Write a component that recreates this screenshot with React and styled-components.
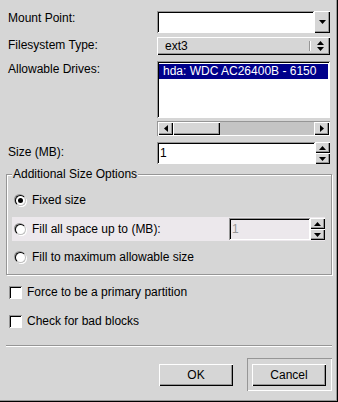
import React from 'react';
import styled, { createGlobalStyle, css } from 'styled-components';

const BG = '#d6d6d6';
const DARK = '#969696';

const raised = css`
  box-shadow: inset 1px 1px 0 #fff, inset -1px -1px 0 #000, inset -2px -2px 0 ${DARK};
`;

const sunken = css`
  box-shadow: inset 1px 1px 0 ${DARK}, inset -1px -1px 0 #fff, inset 2px 2px 0 #000;
`;

const GlobalStyle = createGlobalStyle`
  html, body { margin: 0; padding: 0; background: ${BG}; }
  * { box-sizing: border-box; }
`;

const Window = styled.div`
  width: 338px;
  height: 402px;
  background: ${BG};
  font-family: "Liberation Sans", Arial, sans-serif;
  font-size: 12px;
  color: #000;
  box-shadow: inset -1px -1px 0 #000, inset -2px -2px 0 ${DARK};
  display: flex;
  flex-direction: column;
  overflow: hidden;
`;

const Form = styled.div`
  padding: 0 8px;
`;

const Row = styled.div`
  display: flex;
  margin-top: ${p => p.$mt}px;
`;

const Label = styled.div`
  width: 149px;
  flex: none;
  line-height: 14px;
  padding-top: ${p => p.$pt || 0}px;
`;

const Control = styled.div`
  width: 173px;
  flex: none;
`;

const Combo = styled.div`
  display: flex;
  height: 22px;
`;

const Entry = styled.div`
  flex: 1;
  background: ${p => (p.$disabled ? '#ece8ec' : '#fff')};
  color: ${p => (p.$disabled ? '#969696' : '#000')};
  ${sunken};
  padding: 4px 3px 0;
  line-height: 14px;
`;

const ArrowButton = styled.div`
  width: 16px;
  flex: none;
  ${raised};
  display: flex;
  align-items: center;
  justify-content: center;
  background: ${BG};
`;

const OptionMenu = styled.div`
  height: 18px;
  ${raised};
  display: flex;
  align-items: center;
  padding: 0 6px 0 8px;
  line-height: 14px;
`;

const Indicator = styled.div`
  margin-left: auto;
  display: flex;
  align-items: center;
  gap: 6px;
`;

const Bar = styled.span`
  width: 2px;
  height: 10px;
  border-left: 1px solid ${DARK};
  border-right: 1px solid #fff;
`;

const UpDown = styled.span`
  display: flex;
  flex-direction: column;
  gap: 2px;
`;

const List = styled.div`
  height: 57px;
  background: #fff;
  ${sunken};
  padding: 3px 2px 0 2px;
`;

const ListItem = styled.div`
  height: 15px;
  line-height: 15px;
  background: ${p => (p.$selected ? '#00008b' : 'transparent')};
  color: ${p => (p.$selected ? '#fff' : '#000')};
  padding-left: 4px;
  white-space: nowrap;
  overflow: hidden;
`;

const Scrollbar = styled.div`
  height: 15px;
  display: flex;
  box-shadow: inset 1px 1px 0 ${DARK}, inset -1px -1px 0 #fff;
  padding: 1px;
`;

const Trough = styled.div`
  flex: 1;
  background: #c4c4c4;
  display: flex;
`;

const Thumb = styled.div`
  width: 47px;
  background: ${BG};
  ${raised};
`;

const ScrollArrow = styled(ArrowButton)`
  width: 15px;
`;

const Spin = styled.div`
  display: flex;
  height: ${p => p.$h || 22}px;
`;

const SpinButtons = styled.div`
  width: 15px;
  flex: none;
  display: flex;
  flex-direction: column;
`;

const SpinHalf = styled(ArrowButton)`
  width: 15px;
  flex: 1;
`;

const Frame = styled.fieldset`
  margin: 3px 6px 0 6px;
  width: 326px;
  padding: 0;
  border: 1px solid ${DARK};
  box-shadow: inset 1px 1px 0 #fff, 1px 1px 0 #fff;
  min-width: 0;
`;

const Legend = styled.legend`
  margin-left: 5px;
  padding: 0 1px;
  line-height: 14px;
  background: ${BG};
`;

const FrameBody = styled.div`
  padding: 7px 6px 5px 5px;
`;

const OptionRow = styled.div`
  height: 24px;
  margin-top: ${p => p.$mt || 0}px;
  display: flex;
  align-items: center;
  padding-left: 3px;
  background: ${p => (p.$hover ? '#ece8ec' : 'transparent')};
`;

const RadioDot = styled.span`
  width: 11px;
  height: 11px;
  flex: none;
  border-radius: 50%;
  background: #fff;
  border: 1px solid;
  border-color: #000 #bdbdbd #bdbdbd #000;
  box-shadow: -1px -1px 0 0 ${DARK}, 1px 1px 0 0 #fff;
  display: flex;
  align-items: center;
  justify-content: center;
  &::after {
    content: '';
    width: 5px;
    height: 5px;
    border-radius: 50%;
    background: ${p => (p.$checked ? '#000' : 'transparent')};
  }
`;

const OptionText = styled.span`
  margin-left: 6px;
  line-height: 14px;
`;

const InlineSpin = styled.div`
  margin-left: auto;
  width: 96px;
  display: flex;
  height: 22px;
`;

const CheckRow = styled.div`
  display: flex;
  align-items: center;
  height: 20px;
  margin-top: ${p => p.$mt}px;
  padding-left: 9px;
`;

const CheckBox = styled.span`
  width: 13px;
  height: 13px;
  flex: none;
  background: #fff;
  ${sunken};
`;

const CheckText = styled.span`
  margin-left: 5px;
  line-height: 14px;
`;

const Separator = styled.div`
  margin: 14px 6px 0 6px;
  height: 2px;
  border-top: 1px solid ${DARK};
  border-bottom: 1px solid #fff;
`;

const ButtonRow = styled.div`
  display: flex;
  justify-content: flex-end;
  align-items: center;
  margin-top: 11px;
  padding-right: 6px;
`;

const Button = styled.div`
  width: 74px;
  height: 22px;
  ${raised};
  background: ${BG};
  display: flex;
  align-items: center;
  justify-content: center;
  line-height: 14px;
`;

const DefaultFrame = styled.div`
  margin-left: 14px;
  width: 85px;
  height: 33px;
  padding: 6px 6px 5px 5px;
  box-shadow: inset 1px 1px 0 ${DARK}, inset -1px -1px 0 #fff;
`;

const Tri = ({ dir, w = 7, h = 4 }) => {
  const pts = {
    down: `0,0 ${w},0 ${w / 2},${h}`,
    up: `0,${h} ${w},${h} ${w / 2},0`,
    left: `${w},0 ${w},${h} 0,${h / 2}`,
    right: `0,0 0,${h} ${w},${h / 2}`,
  }[dir];
  return (
    <svg width={w} height={h} viewBox={`0 0 ${w} ${h}`} style={{ display: 'block' }}>
      <polygon points={pts} fill="#000" />
    </svg>
  );
};

const SpinArrows = () => (
  <SpinButtons>
    <SpinHalf><Tri dir="up" w={7} h={4} /></SpinHalf>
    <SpinHalf><Tri dir="down" w={7} h={4} /></SpinHalf>
  </SpinButtons>
);

const App = () => (
  <>
    <GlobalStyle />
    <Window>
      <Form>
        <Row $mt={11}>
          <Label>Mount Point:</Label>
          <Control>
            <Combo>
              <Entry />
              <ArrowButton><Tri dir="down" w={7} h={4} /></ArrowButton>
            </Combo>
          </Control>
        </Row>
        <Row $mt={4}>
          <Label $pt={1}>Filesystem Type:</Label>
          <Control>
            <OptionMenu>
              ext3
              <Indicator>
                <Bar />
                <UpDown>
                  <Tri dir="up" w={7} h={4} />
                  <Tri dir="down" w={7} h={4} />
                </UpDown>
              </Indicator>
            </OptionMenu>
          </Control>
        </Row>
        <Row $mt={6}>
          <Label $pt={1}>Allowable Drives:</Label>
          <Control>
            <List>
              <ListItem $selected>hda: WDC AC26400B - 6150</ListItem>
            </List>
          </Control>
        </Row>
        <Row $mt={3}>
          <Label />
          <Control>
            <Scrollbar>
              <ScrollArrow><Tri dir="left" w={4} h={7} /></ScrollArrow>
              <Trough>
                <Thumb />
              </Trough>
              <ScrollArrow><Tri dir="right" w={4} h={7} /></ScrollArrow>
            </Scrollbar>
          </Control>
        </Row>
        <Row $mt={6}>
          <Label $pt={3}>Size (MB):</Label>
          <Control>
            <Spin>
              <Entry>1</Entry>
              <SpinArrows />
            </Spin>
          </Control>
        </Row>
      </Form>

      <Frame>
        <Legend>Additional Size Options</Legend>
        <FrameBody>
          <OptionRow>
            <RadioDot $checked />
            <OptionText>Fixed size</OptionText>
          </OptionRow>
          <OptionRow $mt={5} $hover>
            <RadioDot />
            <OptionText>Fill all space up to (MB):</OptionText>
            <InlineSpin>
              <Entry $disabled>1</Entry>
              <SpinArrows />
            </InlineSpin>
          </OptionRow>
          <OptionRow $mt={4}>
            <RadioDot />
            <OptionText>Fill to maximum allowable size</OptionText>
          </OptionRow>
        </FrameBody>
      </Frame>

      <CheckRow $mt={7}>
        <CheckBox />
        <CheckText>Force to be a primary partition</CheckText>
      </CheckRow>
      <CheckRow $mt={9}>
        <CheckBox />
        <CheckText>Check for bad blocks</CheckText>
      </CheckRow>

      <Separator />

      <ButtonRow>
        <Button>OK</Button>
        <DefaultFrame>
          <Button>Cancel</Button>
        </DefaultFrame>
      </ButtonRow>
    </Window>
  </>
);

export default App;
